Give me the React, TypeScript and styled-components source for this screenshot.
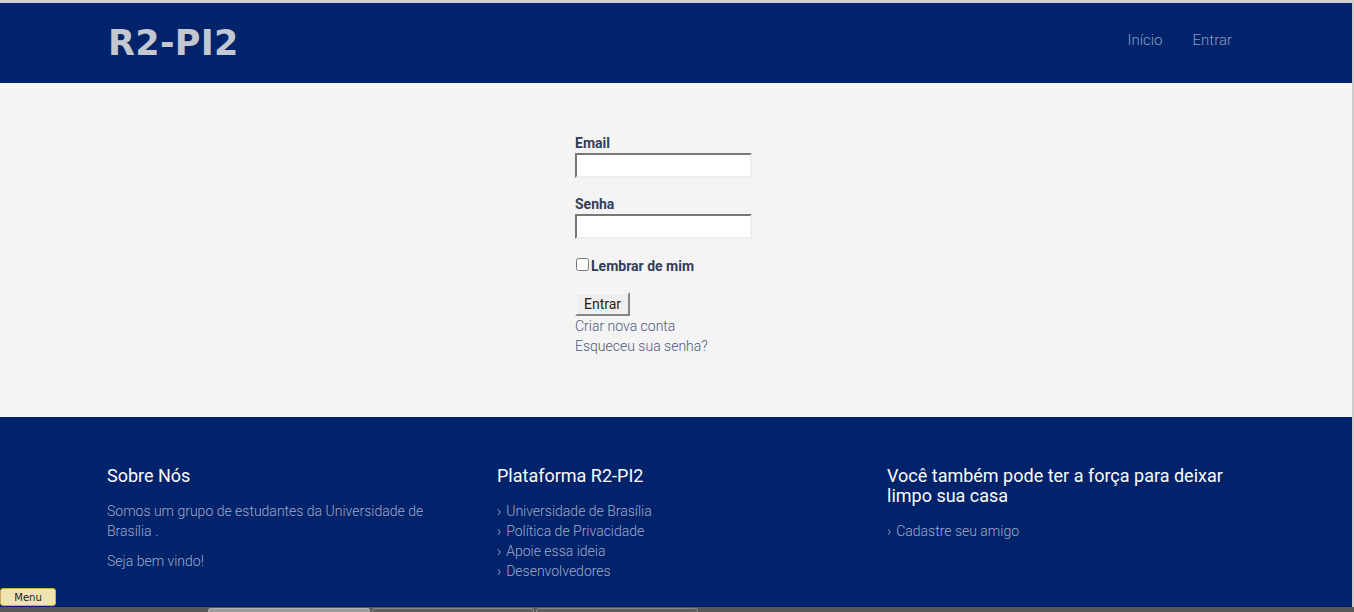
import React from 'react'
import styled, { createGlobalStyle } from 'styled-components'

const navy = '#00236b'

const GlobalStyle = createGlobalStyle`
  html, body {
    margin: 0;
    padding: 0;
  }
  body {
    font-family: Roboto, 'Liberation Sans', Arial, sans-serif;
    background: ${navy};
  }
  * {
    box-sizing: border-box;
  }
`

const Page = styled.div`
  border-top: 3px solid #d2d2d2;
  min-height: 100vh;
  display: flex;
  flex-direction: column;
`

const Container = styled.div`
  width: 1170px;
  margin: 0 auto;
  padding: 0 15px;
`

const Header = styled.header`
  height: 80px;
  background: ${navy};
`

const HeaderInner = styled(Container)`
  height: 100%;
  display: flex;
  align-items: center;
  justify-content: space-between;
`

const Logo = styled.a`
  font-family: 'DejaVu Sans', Verdana, sans-serif;
  font-weight: bold;
  font-size: 35px;
  color: #c3c7cf;
  text-decoration: none;
  letter-spacing: 0.3px;
  padding-left: 1px;
`

const Nav = styled.nav`
  display: flex;
  padding-bottom: 6px;
`

const NavLink = styled.a`
  padding: 0 15px;
  font-size: 15px;
  font-weight: 300;
  color: #8b9cc6;
  text-decoration: none;
`

const Main = styled.main`
  background: #f4f4f4;
  padding: 50px 0 61px;
`

const LoginForm = styled.form`
  width: 204px;
  margin: 0 auto;
  display: flex;
  flex-direction: column;
`

const Field = styled.div<{ gap?: number }>`
  display: flex;
  flex-direction: column;
  margin-bottom: ${p => p.gap ?? 16}px;
`

const Label = styled.label`
  font-size: 14px;
  font-weight: bold;
  line-height: 20px;
  color: #333e58;
`

const TextInput = styled.input`
  width: 177px;
  height: 25px;
  padding: 1px 2px;
  background: #fff;
  border-style: solid;
  border-width: 2px;
  border-color: #777 #eeeeee #eeeeee #777;
  font-size: 13px;
  outline: none;
`

const CheckRow = styled.label`
  display: flex;
  align-items: center;
  height: 20px;
  margin-bottom: 16px;
  font-size: 14px;
  font-weight: bold;
  color: #333e58;
`

const CheckBox = styled.input`
  width: 13px;
  height: 13px;
  margin: -4px 2px 0 1px;
`

const SubmitButton = styled.button`
  align-self: flex-start;
  width: 55px;
  height: 24px;
  padding: 0;
  background: #efefef;
  border-style: solid;
  border-width: 2px;
  border-color: #f6f6f6 #858585 #858585 #f6f6f6;
  font-family: Roboto, 'Liberation Sans', Arial, sans-serif;
  font-size: 14px;
  color: #222;
`

const FormLink = styled.a`
  font-size: 14px;
  font-weight: 300;
  line-height: 20px;
  color: #4b5a7c;
  text-decoration: none;
`

const Footer = styled.footer`
  flex: 1;
  background: ${navy};
  padding: 49px 0 50px;
`

const FooterGrid = styled.div`
  width: 1170px;
  margin: 0 auto;
  display: grid;
  grid-template-columns: repeat(3, 1fr);
`

const FooterCol = styled.div`
  padding: 0 15px;
`

const FooterTitle = styled.h4`
  margin: 0 0 15px;
  font-size: 18px;
  font-weight: 400;
  line-height: 20px;
  color: #fbfbfb;
  padding-right: 10px;
`

const FooterText = styled.p`
  margin: 0 0 10px;
  font-size: 14px;
  font-weight: 300;
  line-height: 20px;
  color: #a0aac7;
  padding-right: 40px;
`

const LinkList = styled.ul`
  list-style: none;
  margin: 0;
  padding: 0;
`

const LinkItem = styled.li`
  font-size: 14px;
  font-weight: 300;
  line-height: 20px;
  color: #a0aac7;

  &::before {
    content: '›';
    margin-right: 5px;
  }
`

const EdgeStrip = styled.div`
  position: fixed;
  top: 0;
  right: 0;
  bottom: 0;
  width: 2px;
  background: #cbcbcb;
`

const MenuButton = styled.button`
  position: fixed;
  left: 0;
  bottom: 6px;
  width: 56px;
  height: 18px;
  padding: 0;
  background: #efe3b2;
  border: 1px solid #c9ad55;
  border-radius: 3px;
  font-family: 'DejaVu Sans', Verdana, sans-serif;
  font-size: 10px;
  color: #222;
`

const Taskbar = styled.div`
  position: fixed;
  left: 0;
  right: 0;
  bottom: 0;
  height: 5px;
  background: #585858;
  display: flex;
  padding: 1px 0 0 208px;
  gap: 2px;
`

const TaskTab = styled.div<{ active?: boolean }>`
  width: 162px;
  background: ${p => (p.active ? '#9c9c9c' : '#5f5f5f')};
  border: 1px solid ${p => (p.active ? '#b4b4b4' : '#8a8a8a')};
  border-bottom: none;
  border-radius: 3px 3px 0 0;
`

const sitemap = [
  'Universidade de Brasília',
  'Política de Privacidade',
  'Apoie essa ideia',
  'Desenvolvedores',
]

export default function App() {
  return (
    <>
      <GlobalStyle />
      <Page>
        <Header>
          <HeaderInner>
            <Logo href="#">R2-PI2</Logo>
            <Nav>
              <NavLink href="#">Início</NavLink>
              <NavLink href="#">Entrar</NavLink>
            </Nav>
          </HeaderInner>
        </Header>

        <Main>
          <LoginForm onSubmit={e => e.preventDefault()}>
            <Field>
              <Label htmlFor="email">Email</Label>
              <TextInput id="email" type="email" />
            </Field>
            <Field gap={17}>
              <Label htmlFor="senha">Senha</Label>
              <TextInput id="senha" type="password" />
            </Field>
            <CheckRow>
              <CheckBox type="checkbox" />
              Lembrar de mim
            </CheckRow>
            <SubmitButton type="submit">Entrar</SubmitButton>
            <FormLink href="#">Criar nova conta</FormLink>
            <FormLink href="#">Esqueceu sua senha?</FormLink>
          </LoginForm>
        </Main>

        <Footer>
          <FooterGrid>
            <FooterCol>
              <FooterTitle>Sobre Nós</FooterTitle>
              <FooterText>
                Somos um grupo de estudantes da Universidade de Brasília .
              </FooterText>
              <FooterText>Seja bem vindo!</FooterText>
            </FooterCol>
            <FooterCol>
              <FooterTitle>Plataforma R2-PI2</FooterTitle>
              <LinkList>
                {sitemap.map(item => (
                  <LinkItem key={item}>{item}</LinkItem>
                ))}
              </LinkList>
            </FooterCol>
            <FooterCol>
              <FooterTitle>
                Você também pode ter a força para deixar limpo sua casa
              </FooterTitle>
              <LinkList>
                <LinkItem>Cadastre seu amigo</LinkItem>
              </LinkList>
            </FooterCol>
          </FooterGrid>
        </Footer>
      </Page>

      <EdgeStrip />
      <MenuButton>Menu</MenuButton>
      <Taskbar>
        <TaskTab active />
        <TaskTab />
        <TaskTab />
      </Taskbar>
    </>
  )
}
